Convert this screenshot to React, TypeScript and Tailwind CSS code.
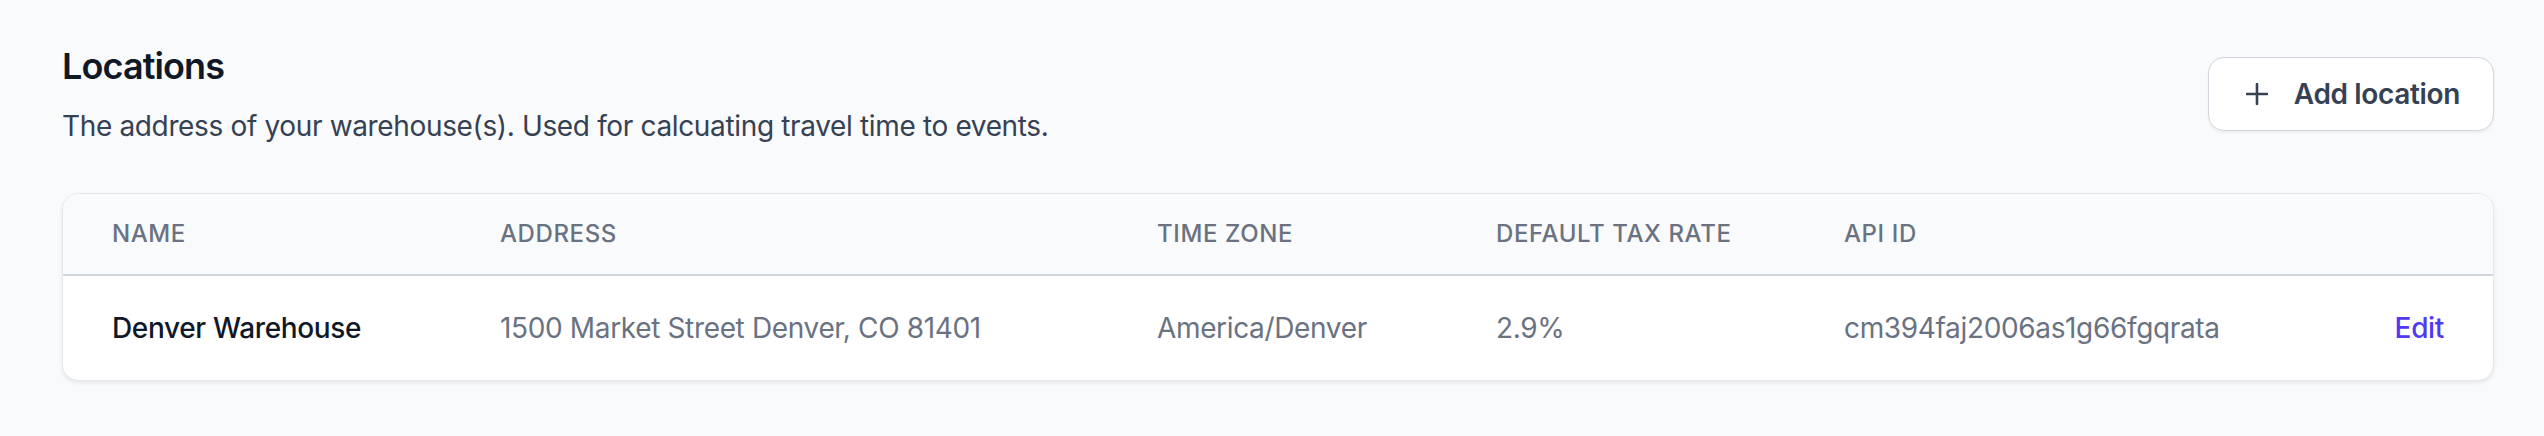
const locations = [
  {
    id: "cm394faj2006as1g66fgqrata",
    name: "Denver Warehouse",
    address: "1500 Market Street Denver, CO 81401",
    timeZone: "America/Denver",
    taxRate: "2.9%",
  },
];

function PlusIcon() {
  return (
    <svg width="22" height="22" viewBox="0 0 22 22" fill="none" className="text-gray-700">
      <path d="M11 1v20M1 11h20" stroke="currentColor" strokeWidth="2.6" strokeLinecap="round" />
    </svg>
  );
}

export default function App() {
  return (
    <div className="min-h-screen bg-[#f9fafb] pl-[62px] pr-[50px] pt-[42px] font-[family-name:Inter,ui-sans-serif,sans-serif] antialiased">
      {/* Header */}
      <div className="flex items-center justify-between">
        <div>
          <h1 className="text-[36px] leading-[48px] font-semibold tracking-[-0.9px] text-gray-900">Locations</h1>
          <p className="mt-[16px] text-[28px] leading-[40px] tracking-[-0.35px] text-gray-700">
            The address of your warehouse(s). Used for calcuating travel time to events.
          </p>
        </div>
        <button className="flex items-center gap-[26px] rounded-[16px] border border-gray-300 bg-white pl-[37px] pr-[33px] py-[16px] text-[28px] leading-[40px] font-semibold tracking-[-0.35px] text-gray-700 shadow-[0_2px_3px_rgba(0,0,0,0.05)]">
          <PlusIcon />
          <span>Add location</span>
        </button>
      </div>

      {/* Table */}
      <div className="mt-[47px] overflow-hidden rounded-[16px] border border-gray-200 bg-white shadow-[0_2px_4px_rgba(0,0,0,0.08)]">
        <table className="w-full table-fixed text-left">
          <thead className="bg-[#f9fafb] border-b-2 border-gray-300">
            <tr className="text-[24px] leading-[32px] font-medium uppercase tracking-wide text-gray-500">
              <th className="w-[437px] pl-[49px] py-[24px] font-medium">Name</th>
              <th className="w-[657px] py-[24px] font-medium">Address</th>
              <th className="w-[339px] py-[24px] font-medium">Time zone</th>
              <th className="w-[348px] py-[24px] font-medium">Default tax rate</th>
              <th className="py-[24px] font-medium">API ID</th>
              <th className="w-[200px] pr-[49px] py-[24px]"></th>
            </tr>
          </thead>
          <tbody>
            {locations.map((loc) => (
              <tr key={loc.id} className="text-[28px] leading-[40px] tracking-[-0.35px] text-gray-500">
                <td className="pl-[49px] py-[32px] font-medium text-gray-900 whitespace-nowrap">{loc.name}</td>
                <td className="py-[32px] whitespace-nowrap">{loc.address}</td>
                <td className="py-[32px] whitespace-nowrap">{loc.timeZone}</td>
                <td className="py-[32px] whitespace-nowrap">{loc.taxRate}</td>
                <td className="py-[32px] whitespace-nowrap">{loc.id}</td>
                <td className="pr-[49px] py-[32px] text-right">
                  <a href="#" className="font-medium text-indigo-600 hover:text-indigo-900">
                    Edit
                  </a>
                </td>
              </tr>
            ))}
          </tbody>
        </table>
      </div>
    </div>
  );
}
